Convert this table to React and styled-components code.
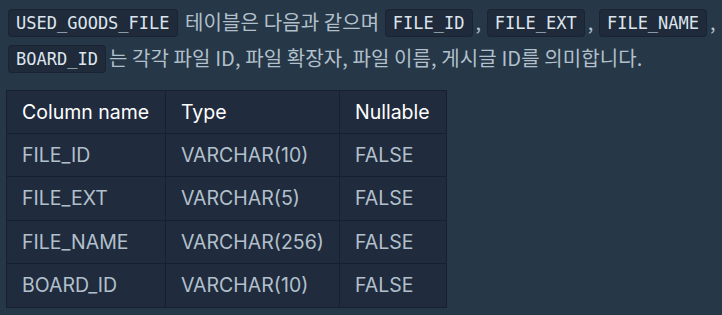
import React from 'react'
import styled, { createGlobalStyle } from 'styled-components'

const COLUMNS = [ 'Column name', 'Type', 'Nullable' ]
const WIDTHS = [ 159, 174, 107 ]
const ROWS = [
	[ 'FILE_ID', 'VARCHAR(10)', 'FALSE' ],
	[ 'FILE_EXT', 'VARCHAR(5)', 'FALSE' ],
	[ 'FILE_NAME', 'VARCHAR(256)', 'FALSE' ],
	[ 'BOARD_ID', 'VARCHAR(10)', 'FALSE' ]
]

const GlobalStyle = createGlobalStyle`
	html, body {
		margin: 0;
		background: #263747;
	}
	body {
		font-family: 'Noto Sans CJK KR', 'Noto Sans', sans-serif;
		color: #b2c0cc;
	}
`

const Page = styled.div`
	padding: 4px 6px;
`

const Paragraph = styled.p`
	margin: 0 0 14px 1px;
	font-size: 20px;
	line-height: 36px;
	color: #b2c0cc;
	letter-spacing: 0.1px;
`

const Code = styled.code`
	font-family: 'DejaVu Sans Mono', monospace;
	font-size: 17px;
	line-height: 18px;
	letter-spacing: 0;
	color: #dde5ec;
	background: #1f2a3b;
	border: 1px solid #1a2332;
	border-radius: 4px;
	padding: 3px 7px;
	margin: 0 3px 0 1px;
	vertical-align: 1px;
`

const Table = styled.table`
	border-collapse: collapse;
	table-layout: fixed;
	width: 441px;
	background: #202b3d;
	font-family: Inter, 'Noto Sans', sans-serif;
	font-size: 19.5px;
	border: 1px solid #172030;
`

const Th = styled.th`
	box-sizing: border-box;
	text-align: left;
	font-weight: 400;
	color: #ffffff;
	height: 42.5px;
	padding: 0 15px;
	border: 1px solid #172030;
	width: ${p => p.width}px;
`

const Td = styled.td`
	color: #b2c0cc;
	height: 42.5px;
	padding: 0 15px;
	border: 1px solid #172030;
	white-space: nowrap;
`

const App = () => (
	<Page>
		<GlobalStyle />
		<Paragraph>
			<Code>USED_GOODS_FILE</Code> 테이블은 다음과 같으며 <Code>FILE_ID</Code>,{' '}
			<Code>FILE_EXT</Code>, <Code>FILE_NAME</Code>,{' '}
			<Code>BOARD_ID</Code>는 각각 파일 ID, 파일 확장자, 파일 이름, 게시글 ID를
			의미합니다.
		</Paragraph>
		<Table>
			<thead>
				<tr>
					{COLUMNS.map((name, i) => (
						<Th key={name} width={WIDTHS[i]}>
							{name}
						</Th>
					))}
				</tr>
			</thead>
			<tbody>
				{ROWS.map(row => (
					<tr key={row[0]}>
						{row.map((cell, i) => (
							<Td key={i}>{cell}</Td>
						))}
					</tr>
				))}
			</tbody>
		</Table>
	</Page>
)

export default App
